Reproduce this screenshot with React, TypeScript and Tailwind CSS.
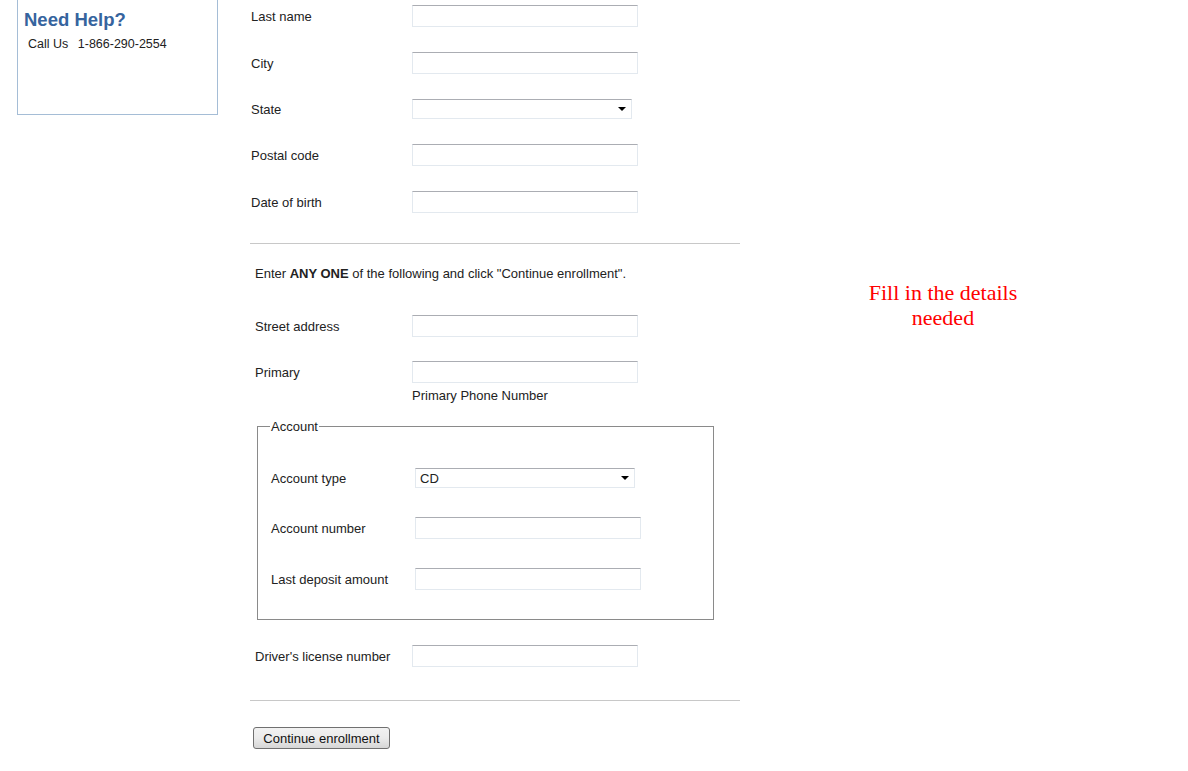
// Enrollment form page: help box on the left, the identity form in the
// middle and a red hint on the right.

const TEXT = 'font-["Liberation_Sans",Arial,sans-serif] text-[13px] leading-[16px] text-[#222]'

function TextBox({ w = 'w-[226px]' }: { w?: string }) {
  return (
    <input
      type="text"
      className={`h-[22px] ${w} border border-[#e3e9ef] border-t-[#abadb3] bg-white px-1 outline-none`}
    />
  )
}

function SelectBox({ value = '' }: { value?: string }) {
  return (
    <div className="flex h-[20px] w-[220px] items-center justify-between border border-[#e3e9ef] border-t-[#abadb3] bg-white pl-[4px] pr-[5px]">
      <span className="mt-[2px]">{value}</span>
      <span className="h-0 w-0 border-x-[4px] border-t-[4px] border-x-transparent border-t-black" />
    </div>
  )
}

function Row({ label, labelW, children, className = '' }: { label: string; labelW: string; children: React.ReactNode; className?: string }) {
  return (
    <div className={`flex items-center ${className}`}>
      <span className={`${labelW} mt-[2px] shrink-0`}>{label}</span>
      {children}
    </div>
  )
}

export default function App() {
  return (
    <div className={`flex min-h-[771px] w-[1188px] bg-white ${TEXT}`}>
      <aside className="ml-[17px] h-[115px] w-[201px] shrink-0 border-x border-b border-[#a5bdd6]">
        <h2 className="pl-[6px] pt-[9px] text-[18.5px] font-bold leading-[22px] text-[#36649e]">Need Help?</h2>
        <p className="mt-[5px] pl-[10px] text-[12.5px]">
          Call Us <span className="ml-[6px]">1-866-290-2554</span>
        </p>
      </aside>

      <main className="ml-[32px] flex w-[490px] shrink-0 flex-col">
        <div className="flex flex-col pl-px">
          <Row label="Last name" labelW="w-[161px]" className="mt-[5px]"><TextBox /></Row>
          <Row label="City" labelW="w-[161px]" className="mt-[25px]"><TextBox /></Row>
          <Row label="State" labelW="w-[161px]" className="mt-[25px]"><SelectBox /></Row>
          <Row label="Postal code" labelW="w-[161px]" className="mt-[25px]"><TextBox /></Row>
          <Row label="Date of birth" labelW="w-[161px]" className="mt-[25px]"><TextBox /></Row>
        </div>

        <hr className="mt-[30px] border-t border-[#c8c8c8]" />

        <p className="mt-[22px] pl-[5px]">
          Enter <b>ANY ONE</b> of the following and click "Continue enrollment".
        </p>

        <div className="flex flex-col pl-[5px]">
          <Row label="Street address" labelW="w-[157px]" className="mt-[33px]"><TextBox /></Row>
          <Row label="Primary" labelW="w-[157px]" className="mt-[24px]"><TextBox /></Row>
          <p className="mt-[5px] pl-[157px]">Primary Phone Number</p>
        </div>

        <fieldset className="ml-[7px] mt-[15px] w-[457px] border border-[#8a8a8a] pb-[29px] pl-[13px]">
          <legend className="-ml-px px-px leading-[15px]">Account</legend>
          <Row label="Account type" labelW="w-[144px]" className="mt-[34px]"><SelectBox value="CD" /></Row>
          <Row label="Account number" labelW="w-[144px]" className="mt-[29px]"><TextBox /></Row>
          <Row label="Last deposit amount" labelW="w-[144px]" className="mt-[29px]"><TextBox /></Row>
        </fieldset>

        <div className="pl-[5px]">
          <Row label="Driver's license number" labelW="w-[157px]" className="mt-[25px]"><TextBox /></Row>
        </div>

        <hr className="mt-[33px] border-t border-[#c8c8c8]" />

        <div className="mt-[26px] pl-[3px]">
          <button
            type="button"
            className="h-[22px] w-[137px] rounded-[3px] border border-[#707070] bg-gradient-to-b from-[#f2f2f2] via-[#ebebeb] to-[#d6d6d6] pt-px text-[13px] leading-[16px] text-[#111]"
          >
            Continue enrollment
          </button>
        </div>
      </main>

      <div className="w-[406px] shrink-0 pt-[280px] text-center font-['Liberation_Serif','Times_New_Roman',serif] text-[22px] leading-[25px] text-[#ff0000]">
        Fill in the details
        <br />
        needed
      </div>
    </div>
  )
}
